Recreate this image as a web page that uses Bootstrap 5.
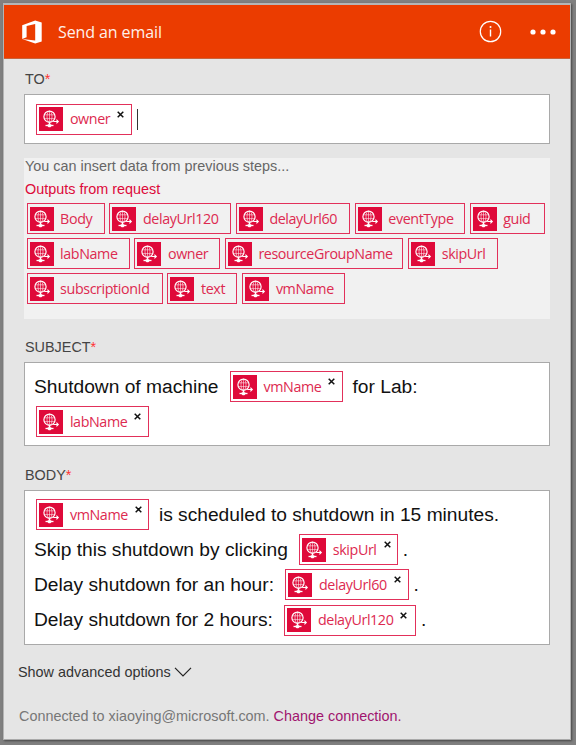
<!DOCTYPE html>
<html lang="en">
<head>
<meta charset="utf-8">
<meta name="viewport" content="width=device-width, initial-scale=1">
<title>Send an email</title>
<link href="https://cdn.jsdelivr.net/npm/bootstrap@5.3.0/dist/css/bootstrap.min.css" rel="stylesheet">
<style>
body{background:#808080;font-family:"Liberation Sans",Arial,sans-serif;font-size:14.4px;line-height:18px;color:#444;height:745px;overflow:hidden;padding:3px 5px 5px 3px}
.action-card{height:737px;background:#e5e5e5;border:1px solid #b4b4b4;border-top:2px solid #b5b5b5;border-bottom-color:#aaa;box-shadow:1px 1px 2px #444}
.action-head{height:54px;background:#eb3c00;color:#fff;padding:0 13px 0 18px;border-bottom:1px solid #c8643c}
.action-title{font-family:"Open Sans","Noto Sans",sans-serif;font-size:16px;margin-left:15px;padding-top:1px;letter-spacing:-.1px;color:#fff0ea}
.more-dots{margin-left:27px}
.action-body{padding:0 20px}
.req{color:#f33}
.field-label{height:18px;padding-left:1px;margin:20px 0 6px}
.first-label{margin-top:11px}
.subject-label{margin-top:19px}
.field-box{background:#fff;border:1px solid #a9a9a9;color:#111;font-size:19.2px;padding-left:9px}
.to-box{height:50px}
.subject-box{height:84px;padding-top:6px}
.body-box{height:155px;padding-top:6px}
.text-line{height:35.2px;white-space:pre}
.text-line .token{margin-left:11.5px;margin-right:9.5px}
.text-line .token:first-child{margin-left:2.4px}
.text-line .stop{margin-left:-5px}
.picker{background:#f1f1f1;height:161px;margin-top:14px;color:#666}
.picker-hint{padding-left:1px;margin-top:-1px}
.picker-title{padding-left:1px;color:#dd0a3a;margin:5px 0}
.picker>div:first-child{position:static}
.picker-wrap{padding-top:0}
.picker-row{gap:4.9px;padding-left:2.6px;margin-bottom:4.2px}
.token{height:31px;border:1px solid #e2305a;padding-left:2px;font-family:"Open Sans","Noto Sans",sans-serif;font-size:14.3px;letter-spacing:-.4px;color:#dd2a50;flex:none}
.token svg{width:24px;height:24px;margin-right:6.5px;flex:none}
.token .close-x{width:7px;height:7px;margin:0 0 10px 7px}
.w-body{width:78px}.w-guid{width:75px}.w-text{width:70px}.w-event{width:110px}
.w-owner{width:85.5px}.w-name{width:103px}.w-skip{width:89.5px}.w-d60{width:114px}.w-d120{width:121.5px}
.w-group{width:178.5px}.w-sub{width:136px}
.x-owner{width:96px}.x-name{width:113px}.x-skip{width:99px}.x-d60{width:123.5px}.x-d120{width:132px}
.caret{width:1px;height:21px;background:#333;margin-left:-5px}
.action-foot{padding-left:14px}
.advanced{margin-top:18px;color:#333}
.advanced svg{margin-left:3px}
.connection{margin-top:26px;color:#777;padding-left:1px}
.change-link{color:#a0146e}
</style>
</head>
<body>
<svg class="d-none">
<symbol id="http" viewBox="0 0 24 24"><rect width="24" height="24" fill="#df0a3a"/><g fill="none" stroke="#fff"><circle cx="10.500" cy="9.700" r="5.600" stroke-width="1.200"/><ellipse cx="10.500" cy="9.700" rx="2.500" ry="5.600" stroke-opacity=".65" stroke-width=".9"/><path d="M5 7.800h11M5 11.600h11M10.500 4v11.400" stroke-opacity=".6" stroke-width=".9"/><path d="M10.500 15.300v2.500" stroke-width="1.500"/><path d="M6.500 18.500h8" stroke-width="1.300"/><path d="M14.200 14.500h5M17.400 12.600l1.900 1.900-1.900 1.900" stroke-width="1.100"/></g><path d="M8.700 17.300h3.600v2.100l-1 .8H9.700l-1-.8z" fill="#fff"/></symbol>
<symbol id="x" viewBox="0 0 7 7"><path d="M.7.7l5.600 5.600M6.300.7L.7 6.300" stroke="#111" stroke-width="1.500"/></symbol>
</svg>
<main class="action-card">
<header class="action-head d-flex align-items-center">
<svg width="21" height="24" viewBox="0 0 21 24"><path fill="#fff" d="M.2 5.200 13.200.4l6.500 2V21.600l-6.500 2L.2 18.900l13 1.600V4L4.600 6v11.200L.2 18.900z"/></svg>
<span class="action-title">Send an email</span>
<svg class="ms-auto" width="23" height="23" viewBox="0 0 23 23"><circle cx="11.500" cy="11.500" r="10.200" fill="none" stroke="#fff" stroke-width="1.200"/><path d="M11.500 9.500v7" stroke="#fff" stroke-width="1.400"/><circle cx="11.500" cy="6.900" r="1" fill="#fff"/></svg>
<svg class="more-dots" width="28" height="8" viewBox="0 0 28 8"><g fill="#fff"><circle cx="4" cy="4" r="2.600"/><circle cx="14" cy="4" r="2.600"/><circle cx="24" cy="4" r="2.600"/></g></svg>
</header>
<section class="action-body">
<div class="field-label first-label">TO<span class="req">*</span></div>
<div class="field-box to-box d-flex align-items-center"><div class="text-line d-flex align-items-center"><span class="token x-owner d-flex align-items-center"><svg><use href="#http"/></svg><span>owner</span><svg class="close-x"><use href="#x"/></svg></span><span class="caret"></span></div></div>
<div class="picker d-flex flex-column">
<div class="picker-hint">You can insert data from previous steps...</div>
<div class="picker-title">Outputs from request</div>
<div class="picker-row d-flex">
<span class="token w-body d-flex align-items-center"><svg><use href="#http"/></svg><span>Body</span></span>
<span class="token w-d120 d-flex align-items-center"><svg><use href="#http"/></svg><span>delayUrl120</span></span>
<span class="token w-d60 d-flex align-items-center"><svg><use href="#http"/></svg><span>delayUrl60</span></span>
<span class="token w-event d-flex align-items-center"><svg><use href="#http"/></svg><span>eventType</span></span>
<span class="token w-guid d-flex align-items-center"><svg><use href="#http"/></svg><span>guid</span></span>
</div>
<div class="picker-row d-flex">
<span class="token w-name d-flex align-items-center"><svg><use href="#http"/></svg><span>labName</span></span>
<span class="token w-owner d-flex align-items-center"><svg><use href="#http"/></svg><span>owner</span></span>
<span class="token w-group d-flex align-items-center"><svg><use href="#http"/></svg><span>resourceGroupName</span></span>
<span class="token w-skip d-flex align-items-center"><svg><use href="#http"/></svg><span>skipUrl</span></span>
</div>
<div class="picker-row d-flex">
<span class="token w-sub d-flex align-items-center"><svg><use href="#http"/></svg><span>subscriptionId</span></span>
<span class="token w-text d-flex align-items-center"><svg><use href="#http"/></svg><span>text</span></span>
<span class="token w-name d-flex align-items-center"><svg><use href="#http"/></svg><span>vmName</span></span>
</div>
</div>
<div class="field-label subject-label">SUBJECT<span class="req">*</span></div>
<div class="field-box subject-box">
<div class="text-line d-flex align-items-center"><span>Shutdown of machine</span><span class="token x-name d-flex align-items-center"><svg><use href="#http"/></svg><span>vmName</span><svg class="close-x"><use href="#x"/></svg></span><span>for Lab:</span></div>
<div class="text-line d-flex align-items-center"><span class="token x-name d-flex align-items-center"><svg><use href="#http"/></svg><span>labName</span><svg class="close-x"><use href="#x"/></svg></span></div>
</div>
<div class="field-label">BODY<span class="req">*</span></div>
<div class="field-box body-box">
<div class="text-line d-flex align-items-center"><span class="token x-name d-flex align-items-center"><svg><use href="#http"/></svg><span>vmName</span><svg class="close-x"><use href="#x"/></svg></span><span>is scheduled to shutdown in 15 minutes.</span></div>
<div class="text-line d-flex align-items-center"><span>Skip this shutdown by clicking</span><span class="token x-skip d-flex align-items-center"><svg><use href="#http"/></svg><span>skipUrl</span><svg class="close-x"><use href="#x"/></svg></span><span class="stop">.</span></div>
<div class="text-line d-flex align-items-center"><span>Delay shutdown for an hour:</span><span class="token x-d60 d-flex align-items-center"><svg><use href="#http"/></svg><span>delayUrl60</span><svg class="close-x"><use href="#x"/></svg></span><span class="stop">.</span></div>
<div class="text-line d-flex align-items-center"><span>Delay shutdown for 2 hours:</span><span class="token x-d120 d-flex align-items-center"><svg><use href="#http"/></svg><span>delayUrl120</span><svg class="close-x"><use href="#x"/></svg></span><span class="stop">.</span></div>
</div>
</section>
<footer class="action-foot">
<div class="advanced d-flex align-items-center">Show advanced options<svg width="18" height="10" viewBox="0 0 18 10"><path d="M1 .8l8 8 8-8" fill="none" stroke="#222" stroke-width="1.200"/></svg></div>
<div class="connection">Connected to xiaoying@microsoft.com. <span class="change-link">Change connection.</span></div>
</footer>
</main>
<script src="https://cdn.jsdelivr.net/npm/bootstrap@5.3.0/dist/js/bootstrap.bundle.min.js"></script>
</body>
</html>
